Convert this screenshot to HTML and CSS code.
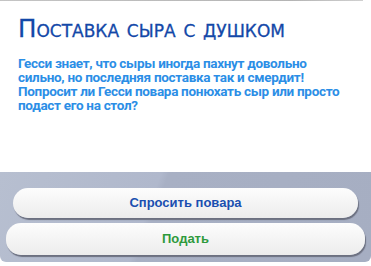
FILE: index.html
```html
<!DOCTYPE html>
<html>
<head>
    <title>Поставка сыра с душком</title>
    <link rel="stylesheet" href="styles.css">
</head>
<body>
    <div class="dialog">
        <div class="top-line"></div>
        <div class="content">
            <h1>Поставка сыра с душком</h1>
            <p>Гесси знает, что сыры иногда пахнут довольно сильно, но последняя поставка так и смердит! Попросит ли Гесси повара понюхать сыр или просто подаст его на стол?</p>
        </div>
        <div class="choices">
            <button class="choice first">Спросить повара</button>
            <button class="choice second">Подать</button>
        </div>
    </div>
</body>
</html>
```

FILE: styles.css
```css
body {
    margin: 0;
    background: white;
    font-family: "Liberation Sans", Arial, sans-serif;
}

.dialog {
    width: 371px;
    height: 266px;
    display: flex;
    flex-direction: column;
}

.top-line {
    width: 363px;
    height: 1px;
    background: linear-gradient(90deg, #c4c4c4, #b4b4b4 80%, #d0d0d0);
}

.content {
    flex: 1;
    padding: 0 18px;
}

h1 {
    margin: 13px 0 0;
    font-family: "DejaVu Sans", sans-serif;
    font-variant: small-caps;
    font-weight: normal;
    font-size: 24.5px;
    line-height: 30px;
    color: #1348a8;
    letter-spacing: 0;
    white-space: nowrap;
    -webkit-text-stroke: 0.3px #1348a8;
}

p {
    margin: 12px 0 0;
    font-family: Roboto, "Liberation Sans", sans-serif;
    font-size: 13.5px;
    font-weight: bold;
    line-height: 14px;
    letter-spacing: -0.3px;
    color: #2b8ee6;
}

.choices {
    height: 90px;
    margin-bottom: 4px;
    border-radius: 0 0 6px 6px;
    background: linear-gradient(110deg, #b7bfd0 0%, #b0b8cc 40%, #a8b0c4 42%, #a6aec2 100%);
    display: flex;
    flex-direction: column;
    align-items: center;
    padding-top: 16px;
    gap: 5px;
    box-sizing: border-box;
}

.choice {
    border: none;
    border-radius: 15px;
    background: linear-gradient(#fdfdfd, #ececec);
    box-shadow: 1px 2px 1px #6c7080;
    font-family: "Liberation Sans", Arial, sans-serif;
    font-size: 13px;
    font-weight: bold;
    padding-bottom: 3px;
}

.first {
    width: 345px;
    height: 30px;
    color: #1a4fb0;
}

.second {
    width: 359px;
    height: 32px;
    color: #2e9a3c;
}
```
